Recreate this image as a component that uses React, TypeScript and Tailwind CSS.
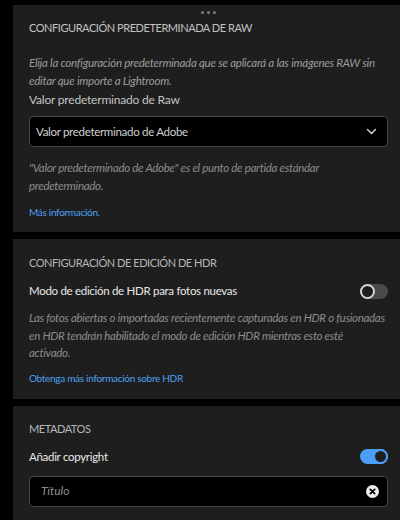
import React, { useState } from 'react';

const font = { fontFamily: 'Lato, "Noto Sans", sans-serif' };

const Toggle: React.FC<{ on: boolean; onChange: () => void }> = ({ on, onChange }) => (
  <button
    onClick={onChange}
    className={`relative w-[28px] h-[15px] rounded-full shrink-0 ${on ? 'bg-[#4d9ef6]' : 'bg-[#4a4a4a]'}`}
  >
    <span
      className={`absolute top-0 w-[15px] h-[15px] rounded-full ${
        on ? 'right-0 bg-[#1e1e1e] border-[2px] border-[#4d9ef6]' : 'left-0 bg-[#1e1e1e] border-[2px] border-[#d4d4d4]'
      }`}
    />
  </button>
);

export default function App() {
  const [hdr, setHdr] = useState(false);
  const [copyright, setCopyright] = useState(true);
  const [title, setTitle] = useState('');

  return (
    <div className="w-[400px] h-[520px] bg-black overflow-hidden pl-[13px] pt-[5px] flex flex-col gap-[7px]" style={font}>
      {/* RAW */}
      <section className="bg-[#1e1e1e] pl-4 pr-[12px] pt-[6px] pb-[13px]">
        <div className="flex justify-center gap-[3px]">
          <span className="w-[3px] h-[3px] rounded-full bg-[#7a7a7a]" />
          <span className="w-[3px] h-[3px] rounded-full bg-[#7a7a7a]" />
          <span className="w-[3px] h-[3px] rounded-full bg-[#7a7a7a]" />
        </div>
        <h2 className="mt-[6px] text-[11px] leading-[16px] tracking-[-0.45px] text-[#c2c2c2]">CONFIGURACIÓN PREDETERMINADA DE RAW</h2>
        <p className="mt-[18px] text-[11.5px] leading-[18px] tracking-[-0.25px] italic text-[#9c9c9c]">
          Elija la configuración predeterminada que se aplicará a las imágenes RAW sin editar que importe a Lightroom.
        </p>
        <div className="mt-[2px] text-[12px] leading-[16px] tracking-[-0.2px] text-[#c4c4c4]">Valor predeterminado de Raw</div>
        <button className="mt-[8px] w-full h-[31px] bg-black border border-[#474747] rounded-[4px] flex items-center justify-between pl-[6px] pr-[10px] text-[11.5px] tracking-[-0.3px] text-[#d0d0d0]">
          <span>Valor predeterminado de Adobe</span>
          <svg width="11" height="11" viewBox="0 0 11 11" fill="none" stroke="#cfcfcf" strokeWidth="1.5" strokeLinecap="round" strokeLinejoin="round">
            <path d="M1.5 3.5 L5.5 7.5 L9.5 3.5" />
          </svg>
        </button>
        <p className="mt-[12px] text-[11.5px] leading-[18px] tracking-[-0.3px] italic text-[#8c8c8c]">
          "Valor predeterminado de Adobe" es el punto de partida estándar predeterminado.
        </p>
        <a className="mt-[10px] block text-[10px] leading-[14px] tracking-[-0.3px] text-[#4fa0f2]">Más información.</a>
      </section>

      {/* HDR */}
      <section className="bg-[#1e1e1e] pl-4 pr-[12px] pt-[16px] pb-[14px]">
        <h2 className="text-[11px] leading-[16px] tracking-[-0.45px] text-[#b6b6b6]">CONFIGURACIÓN DE EDICIÓN DE HDR</h2>
        <div className="mt-[10px] h-[20px] flex items-center justify-between">
          <span className="text-[11.5px] tracking-[-0.3px] text-[#e8e8e8]">Modo de edición de HDR para fotos nuevas</span>
          <Toggle on={hdr} onChange={() => setHdr(!hdr)} />
        </div>
        <p className="mt-[8px] text-[11.5px] leading-[17.5px] tracking-[-0.3px] italic text-[#8c8c8c]">
          Las fotos abiertas o importadas recientemente capturadas en HDR o fusionadas en HDR tendrán habilitado el modo de edición HDR mientras esto esté
          <br />
          activado.
        </p>
        <a className="mt-[9px] block text-[10px] leading-[14px] tracking-[-0.3px] text-[#4fa0f2]">Obtenga más información sobre HDR</a>
      </section>

      {/* Metadatos */}
      <section className="flex-1 bg-[#1e1e1e] pl-4 pr-[12px] pt-[15px]">
        <h2 className="text-[11px] leading-[16px] tracking-[-0.45px] text-[#b6b6b6]">METADATOS</h2>
        <div className="mt-[10px] h-[20px] flex items-center justify-between">
          <span className="text-[11.5px] tracking-[-0.3px] text-[#e8e8e8]">Añadir copyright</span>
          <Toggle on={copyright} onChange={() => setCopyright(!copyright)} />
        </div>
        <div className="mt-[9px] h-[31px] bg-black border border-[#474747] rounded-[4px] flex items-center pl-[11px] pr-[8px]">
          <input
            value={title}
            onChange={(e) => setTitle(e.target.value)}
            placeholder="Título"
            className="flex-1 min-w-0 bg-transparent outline-none text-[12px] italic text-[#ddd] placeholder:text-[#8c8c8c]"
          />
          <button onClick={() => setTitle('')} className="w-[13px] h-[13px] rounded-full bg-[#ececec] flex items-center justify-center">
            <svg width="7" height="7" viewBox="0 0 7 7" stroke="#000" strokeWidth="1.7" strokeLinecap="round">
              <path d="M1.3 1.3 L5.7 5.7 M5.7 1.3 L1.3 5.7" />
            </svg>
          </button>
        </div>
      </section>
    </div>
  );
}
